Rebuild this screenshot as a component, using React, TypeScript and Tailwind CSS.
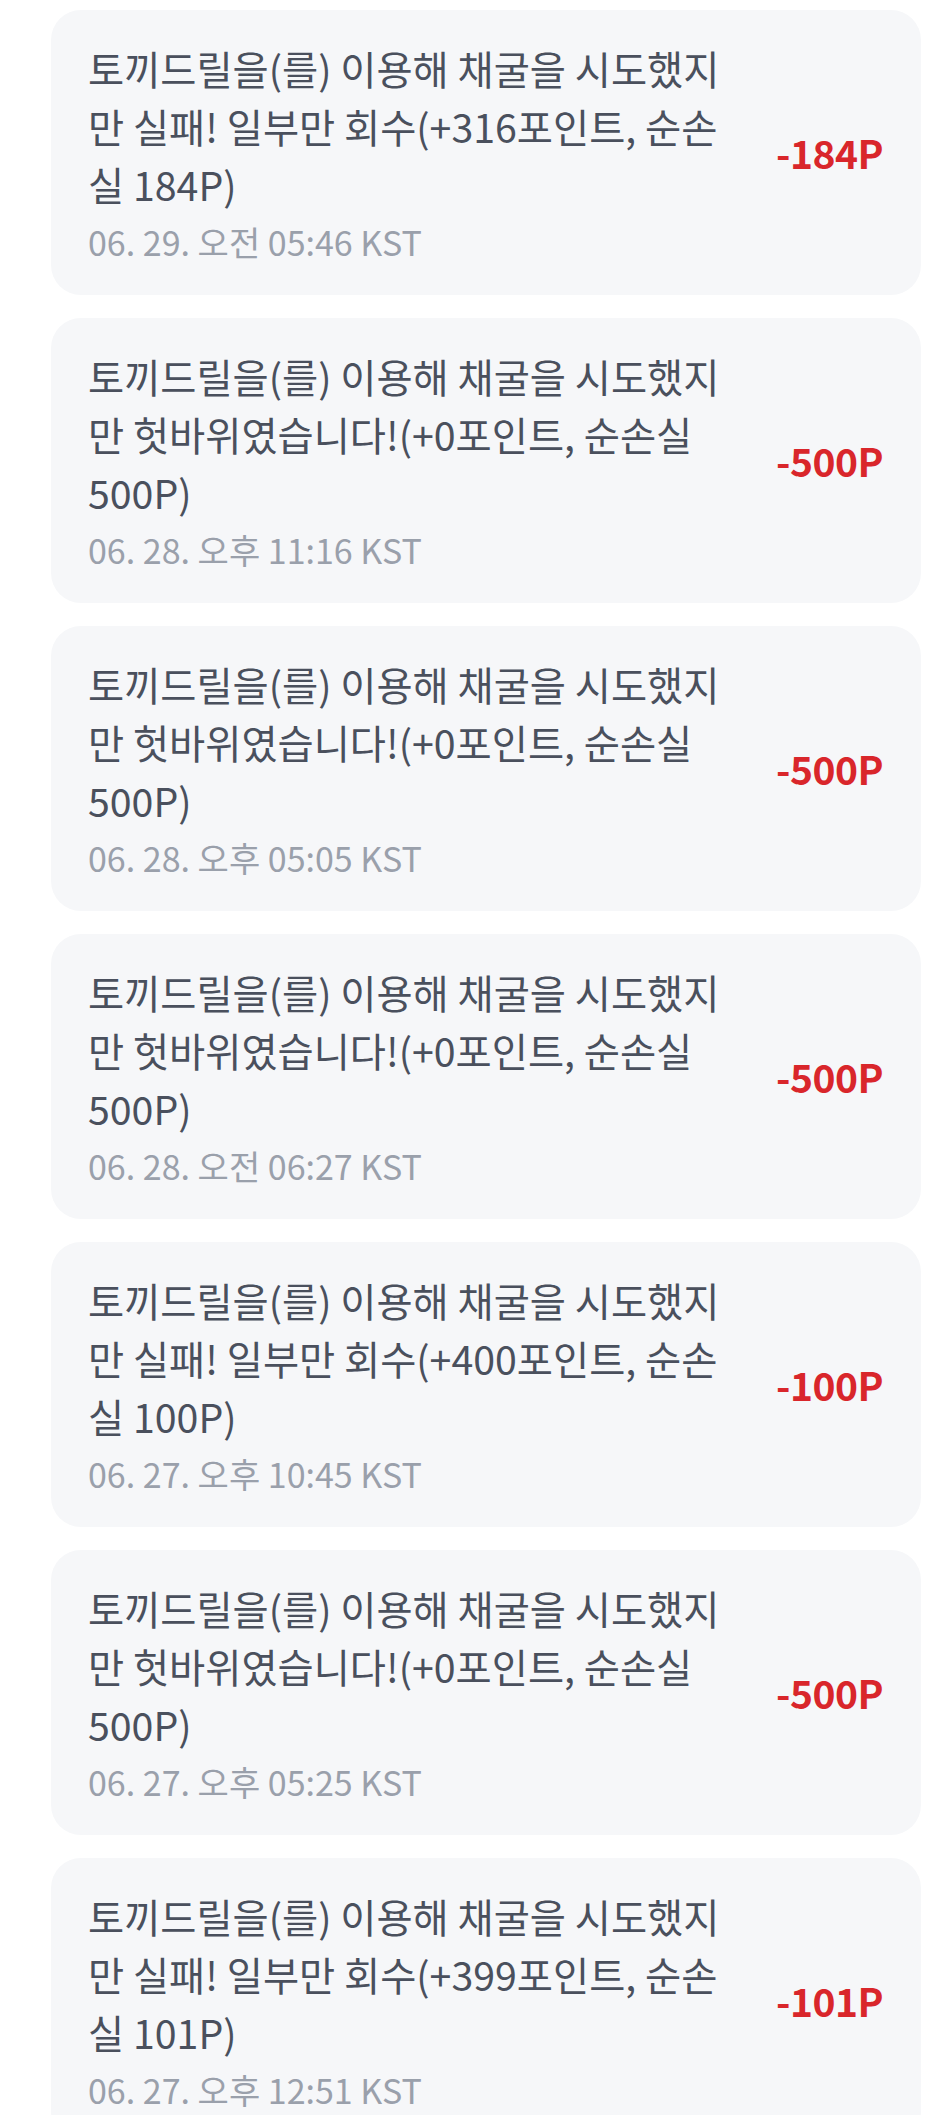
import React from 'react';

type Entry = {
  lines: string[];
  date: string;
  amount: string;
};

const partial = (got: string, loss: string) => [
  '토끼드릴을(를) 이용해 채굴을 시도했지',
  `만 실패! 일부만 회수(+${got}포인트, 순손`,
  `실 ${loss}P)`,
];

const miss = [
  '토끼드릴을(를) 이용해 채굴을 시도했지',
  '만 헛바위였습니다!(+0포인트, 순손실',
  '500P)',
];

const entries: Entry[] = [
  { lines: partial('316', '184'), date: '06. 29. 오전 05:46 KST', amount: '-184P' },
  { lines: miss, date: '06. 28. 오후 11:16 KST', amount: '-500P' },
  { lines: miss, date: '06. 28. 오후 05:05 KST', amount: '-500P' },
  { lines: miss, date: '06. 28. 오전 06:27 KST', amount: '-500P' },
  { lines: partial('400', '100'), date: '06. 27. 오후 10:45 KST', amount: '-100P' },
  { lines: miss, date: '06. 27. 오후 05:25 KST', amount: '-500P' },
  { lines: partial('399', '101'), date: '06. 27. 오후 12:51 KST', amount: '-101P' },
];

const HistoryCard = ({ entry }: { entry: Entry }) => {
  return (
    <div className="flex items-center rounded-[30px] bg-[#f6f7f9] pl-[37px] pr-[38px] pt-[29px] pb-[30px]">
      <div className="flex-1 min-w-0">
        <p className="text-[39.3px] leading-[58px] text-[#4a505d]">
          {entry.lines.map((line, i) => (
            <span key={i} className="block whitespace-nowrap">
              {line}
            </span>
          ))}
        </p>
        <p className="mt-[6px] text-[34px] leading-[46px] text-[#9aa0ab] whitespace-nowrap">
          {entry.date}
        </p>
      </div>
      <div className="shrink-0 text-[39px] font-bold text-[#d9262b] tracking-[-0.5px]">
        {entry.amount}
      </div>
    </div>
  );
};

export default function App() {
  return (
    <div
      className="min-h-screen bg-white pt-[10px] pl-[51px] pr-[22px] overflow-hidden"
      style={{ fontFamily: '"Noto Sans CJK KR", "Noto Sans", sans-serif' }}
    >
      <div className="flex flex-col gap-[23px]">
        {entries.map((entry, i) => (
          <HistoryCard key={i} entry={entry} />
        ))}
      </div>
    </div>
  );
}
